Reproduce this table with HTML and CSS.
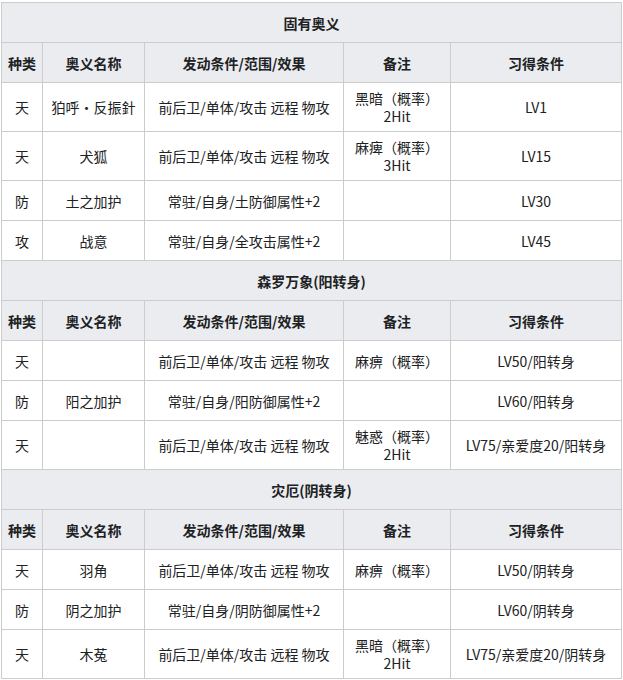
FILE: index.html
```html
<!DOCTYPE html>
<html lang="zh-CN">
<head>
<meta charset="utf-8">
<title>奥义</title>
<link rel="stylesheet" href="styles.css">
</head>
<body>
<table class="skills">
  <colgroup>
    <col class="c-type">
    <col class="c-name">
    <col class="c-cond">
    <col class="c-note">
    <col class="c-learn">
  </colgroup>
  <tr class="section"><th colspan="5">固有奥义</th></tr>
  <tr class="head"><th>种类</th><th>奥义名称</th><th>发动条件/范围/效果</th><th>备注</th><th>习得条件</th></tr>
  <tr><td>天</td><td>狛呼・反振針</td><td>前后卫/单体/攻击 远程 物攻</td><td>黑暗（概率）<br>2Hit</td><td>LV1</td></tr>
  <tr><td>天</td><td>犬狐</td><td>前后卫/单体/攻击 远程 物攻</td><td>麻痺（概率）<br>3Hit</td><td>LV15</td></tr>
  <tr><td>防</td><td>土之加护</td><td>常驻/自身/土防御属性+2</td><td></td><td>LV30</td></tr>
  <tr><td>攻</td><td>战意</td><td>常驻/自身/全攻击属性+2</td><td></td><td>LV45</td></tr>
  <tr class="section"><th colspan="5">森罗万象(阳转身)</th></tr>
  <tr class="head"><th>种类</th><th>奥义名称</th><th>发动条件/范围/效果</th><th>备注</th><th>习得条件</th></tr>
  <tr><td>天</td><td></td><td>前后卫/单体/攻击 远程 物攻</td><td>麻痹（概率）</td><td>LV50/阳转身</td></tr>
  <tr><td>防</td><td>阳之加护</td><td>常驻/自身/阳防御属性+2</td><td></td><td>LV60/阳转身</td></tr>
  <tr><td>天</td><td></td><td>前后卫/单体/攻击 远程 物攻</td><td>魅惑（概率）<br>2Hit</td><td>LV75/亲爱度20/阳转身</td></tr>
  <tr class="section"><th colspan="5">灾厄(阴转身)</th></tr>
  <tr class="head"><th>种类</th><th>奥义名称</th><th>发动条件/范围/效果</th><th>备注</th><th>习得条件</th></tr>
  <tr><td>天</td><td>羽角</td><td>前后卫/单体/攻击 远程 物攻</td><td>麻痹（概率）</td><td>LV50/阴转身</td></tr>
  <tr><td>防</td><td>阴之加护</td><td>常驻/自身/阴防御属性+2</td><td></td><td>LV60/阴转身</td></tr>
  <tr><td>天</td><td>木菟</td><td>前后卫/单体/攻击 远程 物攻</td><td>黑暗（概率）<br>2Hit</td><td>LV75/亲爱度20/阴转身</td></tr>
</table>
</body>
</html>
```

FILE: styles.css
```css
html, body {
  margin: 0;
  padding: 0;
  background: #ffffff;
}

body {
  padding: 2px 0 0 1px;
  font-family: "Noto Sans CJK SC", "Noto Sans", sans-serif;
  font-size: 14px;
  color: #202122;
}

.skills {
  border-collapse: collapse;
  width: 620px;
  table-layout: fixed;
}

.c-type { width: 41px; }
.c-name { width: 102px; }
.c-cond { width: 199px; }
.c-note { width: 107px; }
.c-learn { width: 171px; }

.skills th,
.skills td {
  border: 1px solid #cccccc;
  padding: 6px 4px;
  line-height: 18px;
  text-align: center;
  vertical-align: middle;
}

.skills th {
  background: #eaecf0;
  font-weight: bold;
}

.skills td {
  background: #ffffff;
}

.skills tr {
  height: 40px;
}
```
